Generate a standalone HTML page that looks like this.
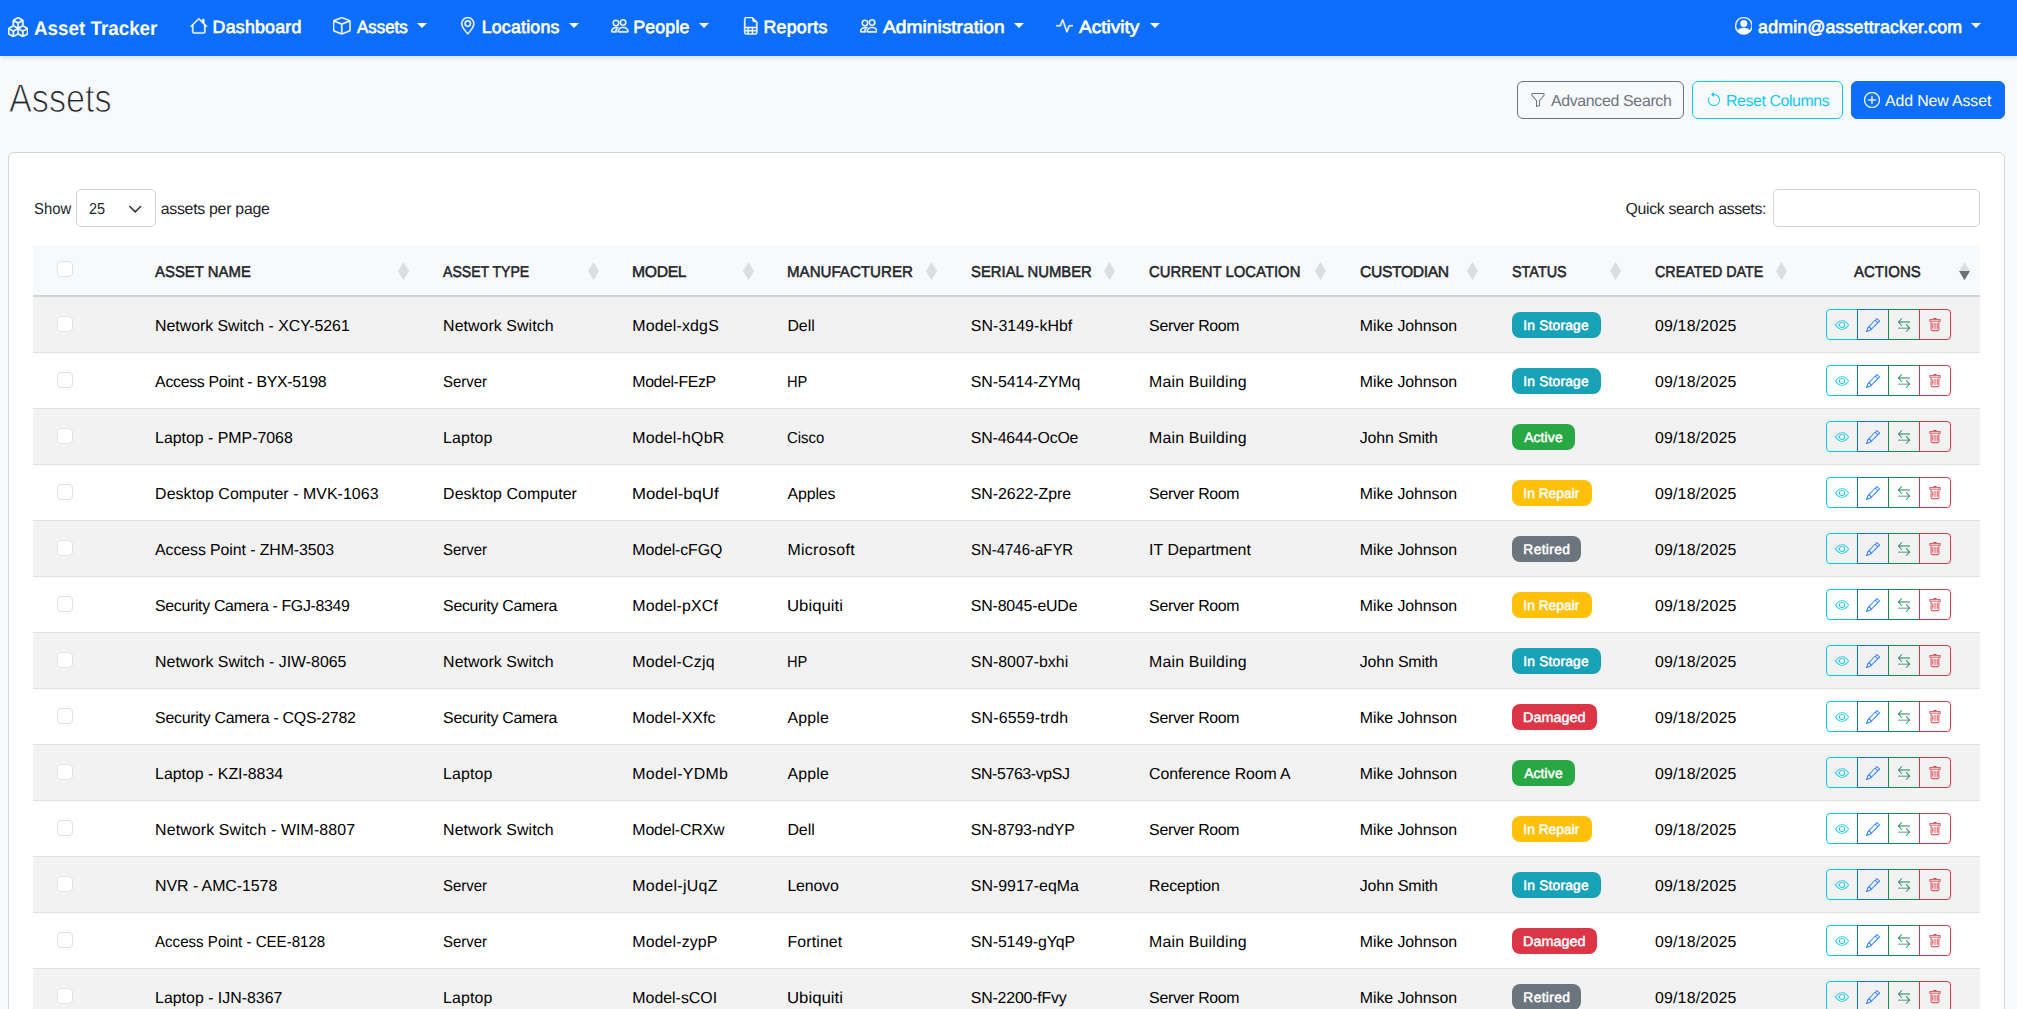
<!DOCTYPE html>
<html><head><meta charset="utf-8"><title>Assets - Asset Tracker</title>
<style>
html,body{margin:0;padding:0}
body{width:2017px;height:1009px;overflow:hidden;position:relative;background:#f8f9fa;font-family:"Liberation Sans",sans-serif;}
.t{position:absolute;white-space:pre;line-height:1;text-rendering:geometricPrecision}
.i{position:absolute;display:block}
.b{position:absolute;box-sizing:border-box}
.nav{left:0;top:0;width:2017px;height:56px;background:#0d6efd;box-shadow:0 2px 4px rgba(0,0,0,.1)}
.caret{position:absolute;width:0;height:0;border-top:5.3px solid #fff;border-left:5.3px solid transparent;border-right:5.3px solid transparent}
.card{left:8px;top:152px;width:1997px;height:900px;background:#fff;border:1px solid #d3d4d5;border-radius:6px}
.btn{height:38px;top:81px;border-radius:6px;border:1px solid}
.row{left:33px;width:1947px;height:56px;border-bottom:1px solid #dee2e6}
.odd{background:#f2f2f2}
.cb{width:16px;height:16px;left:57px;background:#fff;border:1px solid #dee2e6;border-radius:4px}
.bd{height:26px;border-radius:8px;left:1512px}
.ab{width:32px;height:31px;border:1px solid}
.ttl{-webkit-text-stroke:1.1px #f8f9fa}
.th{-webkit-text-stroke:.5px #212529}
.nv{-webkit-text-stroke:.65px #fff}
.bg{-webkit-text-stroke:.5px #fff}
</style></head><body>
<div class="b nav"></div>
<svg class="i" style="left:8px;top:17px;width:20.2px;height:20.2px" viewBox="0 0 16 16" fill="#fff" stroke="#fff" stroke-width="0.35" stroke-linejoin="round"><path d="M7.752.066a.5.5 0 0 1 .496 0l3.75 2.143a.5.5 0 0 1 .252.434v3.995l3.498 2A.5.5 0 0 1 16 9.07v4.286a.5.5 0 0 1-.252.434l-3.75 2.143a.5.5 0 0 1-.496 0l-3.502-2-3.502 2.001a.5.5 0 0 1-.496 0l-3.75-2.143A.5.5 0 0 1 0 13.357V9.071a.5.5 0 0 1 .252-.434L3.75 6.638V2.643a.5.5 0 0 1 .252-.434zM4.25 7.504 1.508 9.071l2.742 1.567 2.742-1.567zM7.5 9.933l-2.75 1.571v3.134l2.75-1.571zm1 3.134 2.75 1.571v-3.134L8.5 9.933zm.508-3.996 2.742 1.567 2.742-1.567-2.742-1.567zm2.242-2.433V3.504L8.5 5.076V8.21zM7.5 8.21V5.076L4.75 3.504v3.134zM5.258 2.643 8 4.21l2.742-1.567L8 1.076zM15 9.933l-2.75 1.571v3.134L15 13.067zM3.75 14.638v-3.134L1 9.933v3.134z"/></svg>
<svg class="i" style="left:190.1px;top:17.1px;width:17.6px;height:17.6px" viewBox="0 0 16 16" fill="#fff" stroke="#fff" stroke-width="0.4" stroke-linejoin="round"><path d="M8.707 1.5a1 1 0 0 0-1.414 0L.646 8.146a.5.5 0 0 0 .708.708L2 8.207V13.5A1.5 1.5 0 0 0 3.5 15h9a1.5 1.5 0 0 0 1.5-1.5V8.207l.646.647a.5.5 0 0 0 .708-.708L13 5.793V2.5a.5.5 0 0 0-.5-.5h-1a.5.5 0 0 0-.5.5v1.293zM13 7.207V13.5a.5.5 0 0 1-.5.5h-9a.5.5 0 0 1-.5-.5V7.207l5-5z"/></svg>
<svg class="i" style="left:333.3px;top:17.1px;width:17.6px;height:17.6px" viewBox="0 0 16 16" fill="#fff" stroke="#fff" stroke-width="0.4" stroke-linejoin="round"><path d="M8.186 1.113a.5.5 0 0 0-.372 0L1.846 3.5 8 5.961 14.154 3.5zM15 4.239l-6.5 2.6v7.922l6.5-2.6V4.24zM7.5 14.762V6.838L1 4.239v7.923zM7.443.184a1.5 1.5 0 0 1 1.114 0l7.129 2.852A.5.5 0 0 1 16 3.5v8.662a1 1 0 0 1-.629.928l-7.185 2.874a.5.5 0 0 1-.372 0L.63 13.09a1 1 0 0 1-.63-.928V3.5a.5.5 0 0 1 .314-.464z"/></svg>
<svg class="i" style="left:459.4px;top:17.1px;width:17.6px;height:17.6px" viewBox="0 0 16 16" fill="#fff" stroke="#fff" stroke-width="0.4" stroke-linejoin="round"><path d="M12.166 8.94c-.524 1.062-1.234 2.12-1.96 3.07A32 32 0 0 1 8 14.58a32 32 0 0 1-2.206-2.57c-.726-.95-1.436-2.008-1.96-3.07C3.304 7.867 3 6.862 3 6a5 5 0 0 1 10 0c0 .862-.305 1.867-.834 2.94M8 16s6-5.686 6-10A6 6 0 0 0 2 6c0 4.314 6 10 6 10"/><path d="M8 8a2 2 0 1 1 0-4 2 2 0 0 1 0 4m0 1a3 3 0 1 0 0-6 3 3 0 0 0 0 6"/></svg>
<svg class="i" style="left:611.4px;top:17.1px;width:17.6px;height:17.6px" viewBox="0 0 16 16" fill="#fff" stroke="#fff" stroke-width="0.4" stroke-linejoin="round"><path d="M15 14s1 0 1-1-1-4-5-4-5 3-5 4 1 1 1 1zm-7.978-1L7 12.996c.001-.264.167-1.03.76-1.72C8.312 10.629 9.282 10 11 10c1.717 0 2.687.63 3.24 1.276.593.69.758 1.457.76 1.72l-.008.002-.014.002zM11 7a2 2 0 1 0 0-4 2 2 0 0 0 0 4m3-2a3 3 0 1 1-6 0 3 3 0 0 1 6 0M6.936 9.28a6 6 0 0 0-1.23-.247A7 7 0 0 0 5 9c-4 0-5 3-5 4q0 1 1 1h4.216A2.24 2.24 0 0 1 5 13c0-1.01.377-2.042 1.09-2.904.243-.294.526-.569.846-.816M4.92 10A5.5 5.5 0 0 0 4 13H1c0-.26.164-1.03.76-1.724.545-.636 1.492-1.256 3.16-1.275ZM1.5 5.5a3 3 0 1 1 6 0 3 3 0 0 1-6 0m3-2a2 2 0 1 0 0 4 2 2 0 0 0 0-4"/></svg>
<svg class="i" style="left:741.6px;top:17.1px;width:17.6px;height:17.6px" viewBox="0 0 16 16" fill="#fff" stroke="#fff" stroke-width="0.4" stroke-linejoin="round"><path d="M14 14V4.5L9.5 0H4a2 2 0 0 0-2 2v12a2 2 0 0 0 2 2h8a2 2 0 0 0 2-2M9.5 3A1.5 1.5 0 0 0 11 4.5h2V9H3V2a1 1 0 0 1 1-1h5.5zM3 12v-2h2v2zm0 1h2v2H4a1 1 0 0 1-1-1zm3 2v-2h3v2zm4 0v-2h3v1a1 1 0 0 1-1 1zm3-3h-3v-2h3zm-7 0v-2h3v2z"/></svg>
<svg class="i" style="left:859.7px;top:17.1px;width:17.6px;height:17.6px" viewBox="0 0 16 16" fill="#fff" stroke="#fff" stroke-width="0.4" stroke-linejoin="round"><path d="M15 14s1 0 1-1-1-4-5-4-5 3-5 4 1 1 1 1zm-7.978-1L7 12.996c.001-.264.167-1.03.76-1.72C8.312 10.629 9.282 10 11 10c1.717 0 2.687.63 3.24 1.276.593.69.758 1.457.76 1.72l-.008.002-.014.002zM11 7a2 2 0 1 0 0-4 2 2 0 0 0 0 4m3-2a3 3 0 1 1-6 0 3 3 0 0 1 6 0M6.936 9.28a6 6 0 0 0-1.23-.247A7 7 0 0 0 5 9c-4 0-5 3-5 4q0 1 1 1h4.216A2.24 2.24 0 0 1 5 13c0-1.01.377-2.042 1.09-2.904.243-.294.526-.569.846-.816M4.92 10A5.5 5.5 0 0 0 4 13H1c0-.26.164-1.03.76-1.724.545-.636 1.492-1.256 3.16-1.275ZM1.5 5.5a3 3 0 1 1 6 0 3 3 0 0 1-6 0m3-2a2 2 0 1 0 0 4 2 2 0 0 0 0-4"/></svg>
<svg class="i" style="left:1055.8px;top:17.1px;width:17.6px;height:17.6px" viewBox="0 0 16 16" fill="#fff" stroke="#fff" stroke-width="0.4" stroke-linejoin="round"><path fill-rule="evenodd" d="M6 2a.5.5 0 0 1 .47.33L10 12.036l1.53-4.208A.5.5 0 0 1 12 7.5h3.5a.5.5 0 0 1 0 1h-3.15l-1.88 5.17a.5.5 0 0 1-.94 0L6 3.964 4.47 8.171A.5.5 0 0 1 4 8.5H.5a.5.5 0 0 1 0-1h3.15l1.88-5.17A.5.5 0 0 1 6 2"/></svg>
<svg class="i" style="left:1734.6px;top:17.1px;width:17.6px;height:17.6px" viewBox="0 0 16 16" fill="#fff" stroke="#fff" stroke-width="0.4" stroke-linejoin="round"><path d="M11 6a3 3 0 1 1-6 0 3 3 0 0 1 6 0"/><path fill-rule="evenodd" d="M0 8a8 8 0 1 1 16 0A8 8 0 0 1 0 8m8-7a7 7 0 0 0-5.468 11.37C3.242 11.226 4.805 10 8 10s4.757 1.225 5.468 2.37A7 7 0 0 0 8 1"/></svg>
<div class="caret" style="left:417.1px;top:23.2px"></div>
<div class="caret" style="left:569.1px;top:23.2px"></div>
<div class="caret" style="left:699.4px;top:23.2px"></div>
<div class="caret" style="left:1013.6px;top:23.2px"></div>
<div class="caret" style="left:1149.5px;top:23.2px"></div>
<div class="caret" style="left:1971px;top:23.2px"></div>
<div class="b btn" style="left:1517px;width:167px;border-color:#6c757d"></div>
<div class="b btn" style="left:1692px;width:151px;border-color:#0dcaf0"></div>
<div class="b btn" style="left:1851px;width:154px;border-color:#0d6efd;background:#0d6efd"></div>
<svg class="i" style="left:1530px;top:92px;width:16px;height:16px" viewBox="0 0 16 16" fill="#6c757d"><path d="M1.5 1.5A.5.5 0 0 1 2 1h12a.5.5 0 0 1 .5.5v2a.5.5 0 0 1-.128.334L10 8.692V13.5a.5.5 0 0 1-.342.474l-3 1A.5.5 0 0 1 6 14.5V8.692L1.628 3.834A.5.5 0 0 1 1.5 3.5zm1 .5v1.308l4.372 4.858A.5.5 0 0 1 7 8.5v5.306l2-.666V8.5a.5.5 0 0 1 .128-.334L13.5 3.308V2z"/></svg>
<svg class="i" style="left:1705.5px;top:92px;width:16px;height:16px" viewBox="0 0 16 16" fill="#0dcaf0"><path fill-rule="evenodd" d="M8 3a5 5 0 1 1-4.546 2.914.5.5 0 0 0-.908-.417A6 6 0 1 0 8 2z"/><path d="M8 4.466V.534a.25.25 0 0 0-.41-.192L5.23 2.308a.25.25 0 0 0 0 .384l2.36 1.966A.25.25 0 0 0 8 4.466"/></svg>
<svg class="i" style="left:1864px;top:92px;width:16px;height:16px" viewBox="0 0 16 16" fill="#fff" stroke="#fff" stroke-width="0.3" stroke-linejoin="round"><path d="M8 15A7 7 0 1 1 8 1a7 7 0 0 1 0 14m0 1A8 8 0 1 0 8 0a8 8 0 0 0 0 16"/><path d="M8 4a.5.5 0 0 1 .5.5v3h3a.5.5 0 0 1 0 1h-3v3a.5.5 0 0 1-1 0v-3h-3a.5.5 0 0 1 0-1h3v-3A.5.5 0 0 1 8 4"/></svg>
<div class="b card"></div>
<div class="b" style="left:76px;top:189px;width:80px;height:38px;border:1px solid #ced4da;border-radius:5px;background:#fff"></div>
<svg class="i" style="left:127.75px;top:201.75px;width:14.4px;height:14.4px" viewBox="0 0 16 16"><path fill="none" stroke="#343a40" stroke-linecap="round" stroke-linejoin="round" stroke-width="1.8" d="m2 5 6 6 6-6"/></svg>
<div class="b" style="left:1773px;top:189px;width:207px;height:38px;border:1px solid #ced4da;border-radius:5px;background:#fff"></div>
<div class="b" style="left:33px;top:245px;width:1947px;height:52px;background:#f8f9fa;border-bottom:2px solid #ced4da"></div>
<div class="b cb" style="top:261px"></div>
<svg class="i" style="left:398.0px;top:261.9px;width:11px;height:18.2px" viewBox="0 0 10.4 17.3" preserveAspectRatio="none"><path d="M5.2 0 10.4 8.65 5.2 17.3 0 8.65z" fill="#dcddde"/></svg>
<svg class="i" style="left:587.9px;top:261.9px;width:11px;height:18.2px" viewBox="0 0 10.4 17.3" preserveAspectRatio="none"><path d="M5.2 0 10.4 8.65 5.2 17.3 0 8.65z" fill="#dcddde"/></svg>
<svg class="i" style="left:743.0px;top:261.9px;width:11px;height:18.2px" viewBox="0 0 10.4 17.3" preserveAspectRatio="none"><path d="M5.2 0 10.4 8.65 5.2 17.3 0 8.65z" fill="#dcddde"/></svg>
<svg class="i" style="left:925.7px;top:261.9px;width:11px;height:18.2px" viewBox="0 0 10.4 17.3" preserveAspectRatio="none"><path d="M5.2 0 10.4 8.65 5.2 17.3 0 8.65z" fill="#dcddde"/></svg>
<svg class="i" style="left:1104.1px;top:261.9px;width:11px;height:18.2px" viewBox="0 0 10.4 17.3" preserveAspectRatio="none"><path d="M5.2 0 10.4 8.65 5.2 17.3 0 8.65z" fill="#dcddde"/></svg>
<svg class="i" style="left:1314.8px;top:261.9px;width:11px;height:18.2px" viewBox="0 0 10.4 17.3" preserveAspectRatio="none"><path d="M5.2 0 10.4 8.65 5.2 17.3 0 8.65z" fill="#dcddde"/></svg>
<svg class="i" style="left:1466.8px;top:261.9px;width:11px;height:18.2px" viewBox="0 0 10.4 17.3" preserveAspectRatio="none"><path d="M5.2 0 10.4 8.65 5.2 17.3 0 8.65z" fill="#dcddde"/></svg>
<svg class="i" style="left:1610.2px;top:261.9px;width:11px;height:18.2px" viewBox="0 0 10.4 17.3" preserveAspectRatio="none"><path d="M5.2 0 10.4 8.65 5.2 17.3 0 8.65z" fill="#dcddde"/></svg>
<svg class="i" style="left:1776.1px;top:261.9px;width:11px;height:18.2px" viewBox="0 0 10.4 17.3" preserveAspectRatio="none"><path d="M5.2 0 10.4 8.65 5.2 17.3 0 8.65z" fill="#dcddde"/></svg>
<svg class="i" style="left:1959.0px;top:261.9px;width:11px;height:18.2px" viewBox="0 0 10.4 17.3" preserveAspectRatio="none"><path d="M5.2 0 10.4 8.65H0z" fill="#dcddde"/><path d="M0 8.65h10.4L5.2 17.3z" fill="#6e7174"/></svg>
<div class="b row odd" style="top:297px"></div>
<div class="b cb" style="top:316px"></div>
<div class="b bd" style="top:312px;width:89.3px;background:#17a2b8"></div>
<div class="b ab" style="left:1826px;top:309px;border-color:#0dcaf0;border-radius:4px 0 0 4px;"></div>
<svg class="i" style="left:1835px;top:317.5px;width:14px;height:14px" viewBox="0 0 16 16" fill="#0dcaf0"><path d="M16 8s-3-5.5-8-5.5S0 8 0 8s3 5.5 8 5.5S16 8 16 8M1.173 8a13 13 0 0 1 1.66-2.043C4.12 4.668 5.88 3.5 8 3.5s3.879 1.168 5.168 2.457A13 13 0 0 1 14.828 8q-.086.13-.195.288c-.335.48-.83 1.12-1.465 1.755C11.879 11.332 10.119 12.5 8 12.5s-3.879-1.168-5.168-2.457A13 13 0 0 1 1.172 8z"/><path d="M8 5.5a2.5 2.5 0 1 0 0 5 2.5 2.5 0 0 0 0-5M4.5 8a3.5 3.5 0 1 1 7 0 3.5 3.5 0 0 1-7 0"/></svg>
<div class="b ab" style="left:1857px;top:309px;border-color:#0d6efd;"></div>
<svg class="i" style="left:1866px;top:317.5px;width:14px;height:14px" viewBox="0 0 16 16" fill="#0d6efd"><path d="M12.146.146a.5.5 0 0 1 .708 0l3 3a.5.5 0 0 1 0 .708l-10 10a.5.5 0 0 1-.168.11l-5 2a.5.5 0 0 1-.65-.65l2-5a.5.5 0 0 1 .11-.168zM11.207 2.5 13.5 4.793 14.793 3.5 12.5 1.207zm1.586 3L10.5 3.207 4 9.707V10h.5a.5.5 0 0 1 .5.5v.5h.5a.5.5 0 0 1 .5.5v.5h.293zm-9.761 5.175-.106.106-1.528 3.821 3.821-1.528.106-.106A.5.5 0 0 1 5 12.5V12h-.5a.5.5 0 0 1-.5-.5V11h-.5a.5.5 0 0 1-.468-.325"/></svg>
<div class="b ab" style="left:1888px;top:309px;border-color:#198754;"></div>
<svg class="i" style="left:1897px;top:317.5px;width:14px;height:14px" viewBox="0 0 16 16" fill="#198754"><path fill-rule="evenodd" d="M1 11.5a.5.5 0 0 0 .5.5h11.793l-3.147 3.146a.5.5 0 0 0 .708.708l4-4a.5.5 0 0 0 0-.708l-4-4a.5.5 0 0 0-.708.708L13.293 11H1.5a.5.5 0 0 0-.5.5m14-7a.5.5 0 0 1-.5.5H2.707l3.147 3.146a.5.5 0 1 1-.708.708l-4-4a.5.5 0 0 1 0-.708l4-4a.5.5 0 1 1 .708.708L2.707 4H14.5a.5.5 0 0 1 .5.5"/></svg>
<div class="b ab" style="left:1919px;top:309px;border-color:#dc3545;border-radius:0 4px 4px 0;"></div>
<svg class="i" style="left:1928px;top:317.5px;width:14px;height:14px" viewBox="0 0 16 16" fill="#dc3545"><path d="M5.5 5.5A.5.5 0 0 1 6 6v6a.5.5 0 0 1-1 0V6a.5.5 0 0 1 .5-.5m2.500 0a.5.5 0 0 1 .5.5v6a.5.5 0 0 1-1 0V6a.5.5 0 0 1 .5-.5m3 .5a.5.5 0 0 0-1 0v6a.5.5 0 0 0 1 0z"/><path d="M14.5 3a1 1 0 0 1-1 1H13v9a2 2 0 0 1-2 2H5a2 2 0 0 1-2-2V4h-.5a1 1 0 0 1-1-1V2a1 1 0 0 1 1-1H6a1 1 0 0 1 1-1h2a1 1 0 0 1 1 1h3.500a1 1 0 0 1 1 1zM4.118 4 4 4.059V13a1 1 0 0 0 1 1h6a1 1 0 0 0 1-1V4.059L11.882 4zM2.500 3h11V2h-11z"/></svg>
<div class="b row" style="top:353px"></div>
<div class="b cb" style="top:372px"></div>
<div class="b bd" style="top:368px;width:89.3px;background:#17a2b8"></div>
<div class="b ab" style="left:1826px;top:365px;border-color:#0dcaf0;border-radius:4px 0 0 4px;"></div>
<svg class="i" style="left:1835px;top:373.5px;width:14px;height:14px" viewBox="0 0 16 16" fill="#0dcaf0"><path d="M16 8s-3-5.5-8-5.5S0 8 0 8s3 5.5 8 5.5S16 8 16 8M1.173 8a13 13 0 0 1 1.66-2.043C4.12 4.668 5.88 3.5 8 3.5s3.879 1.168 5.168 2.457A13 13 0 0 1 14.828 8q-.086.13-.195.288c-.335.48-.83 1.12-1.465 1.755C11.879 11.332 10.119 12.5 8 12.5s-3.879-1.168-5.168-2.457A13 13 0 0 1 1.172 8z"/><path d="M8 5.5a2.5 2.5 0 1 0 0 5 2.5 2.5 0 0 0 0-5M4.5 8a3.5 3.5 0 1 1 7 0 3.5 3.5 0 0 1-7 0"/></svg>
<div class="b ab" style="left:1857px;top:365px;border-color:#0d6efd;"></div>
<svg class="i" style="left:1866px;top:373.5px;width:14px;height:14px" viewBox="0 0 16 16" fill="#0d6efd"><path d="M12.146.146a.5.5 0 0 1 .708 0l3 3a.5.5 0 0 1 0 .708l-10 10a.5.5 0 0 1-.168.11l-5 2a.5.5 0 0 1-.65-.65l2-5a.5.5 0 0 1 .11-.168zM11.207 2.5 13.5 4.793 14.793 3.5 12.5 1.207zm1.586 3L10.5 3.207 4 9.707V10h.5a.5.5 0 0 1 .5.5v.5h.5a.5.5 0 0 1 .5.5v.5h.293zm-9.761 5.175-.106.106-1.528 3.821 3.821-1.528.106-.106A.5.5 0 0 1 5 12.5V12h-.5a.5.5 0 0 1-.5-.5V11h-.5a.5.5 0 0 1-.468-.325"/></svg>
<div class="b ab" style="left:1888px;top:365px;border-color:#198754;"></div>
<svg class="i" style="left:1897px;top:373.5px;width:14px;height:14px" viewBox="0 0 16 16" fill="#198754"><path fill-rule="evenodd" d="M1 11.5a.5.5 0 0 0 .5.5h11.793l-3.147 3.146a.5.5 0 0 0 .708.708l4-4a.5.5 0 0 0 0-.708l-4-4a.5.5 0 0 0-.708.708L13.293 11H1.5a.5.5 0 0 0-.5.5m14-7a.5.5 0 0 1-.5.5H2.707l3.147 3.146a.5.5 0 1 1-.708.708l-4-4a.5.5 0 0 1 0-.708l4-4a.5.5 0 1 1 .708.708L2.707 4H14.5a.5.5 0 0 1 .5.5"/></svg>
<div class="b ab" style="left:1919px;top:365px;border-color:#dc3545;border-radius:0 4px 4px 0;"></div>
<svg class="i" style="left:1928px;top:373.5px;width:14px;height:14px" viewBox="0 0 16 16" fill="#dc3545"><path d="M5.5 5.5A.5.5 0 0 1 6 6v6a.5.5 0 0 1-1 0V6a.5.5 0 0 1 .5-.5m2.500 0a.5.5 0 0 1 .5.5v6a.5.5 0 0 1-1 0V6a.5.5 0 0 1 .5-.5m3 .5a.5.5 0 0 0-1 0v6a.5.5 0 0 0 1 0z"/><path d="M14.5 3a1 1 0 0 1-1 1H13v9a2 2 0 0 1-2 2H5a2 2 0 0 1-2-2V4h-.5a1 1 0 0 1-1-1V2a1 1 0 0 1 1-1H6a1 1 0 0 1 1-1h2a1 1 0 0 1 1 1h3.500a1 1 0 0 1 1 1zM4.118 4 4 4.059V13a1 1 0 0 0 1 1h6a1 1 0 0 0 1-1V4.059L11.882 4zM2.500 3h11V2h-11z"/></svg>
<div class="b row odd" style="top:409px"></div>
<div class="b cb" style="top:428px"></div>
<div class="b bd" style="top:424px;width:62.8px;background:#28a745"></div>
<div class="b ab" style="left:1826px;top:421px;border-color:#0dcaf0;border-radius:4px 0 0 4px;"></div>
<svg class="i" style="left:1835px;top:429.5px;width:14px;height:14px" viewBox="0 0 16 16" fill="#0dcaf0"><path d="M16 8s-3-5.5-8-5.5S0 8 0 8s3 5.5 8 5.5S16 8 16 8M1.173 8a13 13 0 0 1 1.66-2.043C4.12 4.668 5.88 3.5 8 3.5s3.879 1.168 5.168 2.457A13 13 0 0 1 14.828 8q-.086.13-.195.288c-.335.48-.83 1.12-1.465 1.755C11.879 11.332 10.119 12.5 8 12.5s-3.879-1.168-5.168-2.457A13 13 0 0 1 1.172 8z"/><path d="M8 5.5a2.5 2.5 0 1 0 0 5 2.5 2.5 0 0 0 0-5M4.5 8a3.5 3.5 0 1 1 7 0 3.5 3.5 0 0 1-7 0"/></svg>
<div class="b ab" style="left:1857px;top:421px;border-color:#0d6efd;"></div>
<svg class="i" style="left:1866px;top:429.5px;width:14px;height:14px" viewBox="0 0 16 16" fill="#0d6efd"><path d="M12.146.146a.5.5 0 0 1 .708 0l3 3a.5.5 0 0 1 0 .708l-10 10a.5.5 0 0 1-.168.11l-5 2a.5.5 0 0 1-.65-.65l2-5a.5.5 0 0 1 .11-.168zM11.207 2.5 13.5 4.793 14.793 3.5 12.5 1.207zm1.586 3L10.5 3.207 4 9.707V10h.5a.5.5 0 0 1 .5.5v.5h.5a.5.5 0 0 1 .5.5v.5h.293zm-9.761 5.175-.106.106-1.528 3.821 3.821-1.528.106-.106A.5.5 0 0 1 5 12.5V12h-.5a.5.5 0 0 1-.5-.5V11h-.5a.5.5 0 0 1-.468-.325"/></svg>
<div class="b ab" style="left:1888px;top:421px;border-color:#198754;"></div>
<svg class="i" style="left:1897px;top:429.5px;width:14px;height:14px" viewBox="0 0 16 16" fill="#198754"><path fill-rule="evenodd" d="M1 11.5a.5.5 0 0 0 .5.5h11.793l-3.147 3.146a.5.5 0 0 0 .708.708l4-4a.5.5 0 0 0 0-.708l-4-4a.5.5 0 0 0-.708.708L13.293 11H1.5a.5.5 0 0 0-.5.5m14-7a.5.5 0 0 1-.5.5H2.707l3.147 3.146a.5.5 0 1 1-.708.708l-4-4a.5.5 0 0 1 0-.708l4-4a.5.5 0 1 1 .708.708L2.707 4H14.5a.5.5 0 0 1 .5.5"/></svg>
<div class="b ab" style="left:1919px;top:421px;border-color:#dc3545;border-radius:0 4px 4px 0;"></div>
<svg class="i" style="left:1928px;top:429.5px;width:14px;height:14px" viewBox="0 0 16 16" fill="#dc3545"><path d="M5.5 5.5A.5.5 0 0 1 6 6v6a.5.5 0 0 1-1 0V6a.5.5 0 0 1 .5-.5m2.500 0a.5.5 0 0 1 .5.5v6a.5.5 0 0 1-1 0V6a.5.5 0 0 1 .5-.5m3 .5a.5.5 0 0 0-1 0v6a.5.5 0 0 0 1 0z"/><path d="M14.5 3a1 1 0 0 1-1 1H13v9a2 2 0 0 1-2 2H5a2 2 0 0 1-2-2V4h-.5a1 1 0 0 1-1-1V2a1 1 0 0 1 1-1H6a1 1 0 0 1 1-1h2a1 1 0 0 1 1 1h3.500a1 1 0 0 1 1 1zM4.118 4 4 4.059V13a1 1 0 0 0 1 1h6a1 1 0 0 0 1-1V4.059L11.882 4zM2.500 3h11V2h-11z"/></svg>
<div class="b row" style="top:465px"></div>
<div class="b cb" style="top:484px"></div>
<div class="b bd" style="top:480px;width:79.9px;background:#ffc107"></div>
<div class="b ab" style="left:1826px;top:477px;border-color:#0dcaf0;border-radius:4px 0 0 4px;"></div>
<svg class="i" style="left:1835px;top:485.5px;width:14px;height:14px" viewBox="0 0 16 16" fill="#0dcaf0"><path d="M16 8s-3-5.5-8-5.5S0 8 0 8s3 5.5 8 5.5S16 8 16 8M1.173 8a13 13 0 0 1 1.66-2.043C4.12 4.668 5.88 3.5 8 3.5s3.879 1.168 5.168 2.457A13 13 0 0 1 14.828 8q-.086.13-.195.288c-.335.48-.83 1.12-1.465 1.755C11.879 11.332 10.119 12.5 8 12.5s-3.879-1.168-5.168-2.457A13 13 0 0 1 1.172 8z"/><path d="M8 5.5a2.5 2.5 0 1 0 0 5 2.5 2.5 0 0 0 0-5M4.5 8a3.5 3.5 0 1 1 7 0 3.5 3.5 0 0 1-7 0"/></svg>
<div class="b ab" style="left:1857px;top:477px;border-color:#0d6efd;"></div>
<svg class="i" style="left:1866px;top:485.5px;width:14px;height:14px" viewBox="0 0 16 16" fill="#0d6efd"><path d="M12.146.146a.5.5 0 0 1 .708 0l3 3a.5.5 0 0 1 0 .708l-10 10a.5.5 0 0 1-.168.11l-5 2a.5.5 0 0 1-.65-.65l2-5a.5.5 0 0 1 .11-.168zM11.207 2.5 13.5 4.793 14.793 3.5 12.5 1.207zm1.586 3L10.5 3.207 4 9.707V10h.5a.5.5 0 0 1 .5.5v.5h.5a.5.5 0 0 1 .5.5v.5h.293zm-9.761 5.175-.106.106-1.528 3.821 3.821-1.528.106-.106A.5.5 0 0 1 5 12.5V12h-.5a.5.5 0 0 1-.5-.5V11h-.5a.5.5 0 0 1-.468-.325"/></svg>
<div class="b ab" style="left:1888px;top:477px;border-color:#198754;"></div>
<svg class="i" style="left:1897px;top:485.5px;width:14px;height:14px" viewBox="0 0 16 16" fill="#198754"><path fill-rule="evenodd" d="M1 11.5a.5.5 0 0 0 .5.5h11.793l-3.147 3.146a.5.5 0 0 0 .708.708l4-4a.5.5 0 0 0 0-.708l-4-4a.5.5 0 0 0-.708.708L13.293 11H1.5a.5.5 0 0 0-.5.5m14-7a.5.5 0 0 1-.5.5H2.707l3.147 3.146a.5.5 0 1 1-.708.708l-4-4a.5.5 0 0 1 0-.708l4-4a.5.5 0 1 1 .708.708L2.707 4H14.5a.5.5 0 0 1 .5.5"/></svg>
<div class="b ab" style="left:1919px;top:477px;border-color:#dc3545;border-radius:0 4px 4px 0;"></div>
<svg class="i" style="left:1928px;top:485.5px;width:14px;height:14px" viewBox="0 0 16 16" fill="#dc3545"><path d="M5.5 5.5A.5.5 0 0 1 6 6v6a.5.5 0 0 1-1 0V6a.5.5 0 0 1 .5-.5m2.500 0a.5.5 0 0 1 .5.5v6a.5.5 0 0 1-1 0V6a.5.5 0 0 1 .5-.5m3 .5a.5.5 0 0 0-1 0v6a.5.5 0 0 0 1 0z"/><path d="M14.5 3a1 1 0 0 1-1 1H13v9a2 2 0 0 1-2 2H5a2 2 0 0 1-2-2V4h-.5a1 1 0 0 1-1-1V2a1 1 0 0 1 1-1H6a1 1 0 0 1 1-1h2a1 1 0 0 1 1 1h3.500a1 1 0 0 1 1 1zM4.118 4 4 4.059V13a1 1 0 0 0 1 1h6a1 1 0 0 0 1-1V4.059L11.882 4zM2.500 3h11V2h-11z"/></svg>
<div class="b row odd" style="top:521px"></div>
<div class="b cb" style="top:540px"></div>
<div class="b bd" style="top:536px;width:69px;background:#6c757d"></div>
<div class="b ab" style="left:1826px;top:533px;border-color:#0dcaf0;border-radius:4px 0 0 4px;"></div>
<svg class="i" style="left:1835px;top:541.5px;width:14px;height:14px" viewBox="0 0 16 16" fill="#0dcaf0"><path d="M16 8s-3-5.5-8-5.5S0 8 0 8s3 5.5 8 5.5S16 8 16 8M1.173 8a13 13 0 0 1 1.66-2.043C4.12 4.668 5.88 3.5 8 3.5s3.879 1.168 5.168 2.457A13 13 0 0 1 14.828 8q-.086.13-.195.288c-.335.48-.83 1.12-1.465 1.755C11.879 11.332 10.119 12.5 8 12.5s-3.879-1.168-5.168-2.457A13 13 0 0 1 1.172 8z"/><path d="M8 5.5a2.5 2.5 0 1 0 0 5 2.5 2.5 0 0 0 0-5M4.5 8a3.5 3.5 0 1 1 7 0 3.5 3.5 0 0 1-7 0"/></svg>
<div class="b ab" style="left:1857px;top:533px;border-color:#0d6efd;"></div>
<svg class="i" style="left:1866px;top:541.5px;width:14px;height:14px" viewBox="0 0 16 16" fill="#0d6efd"><path d="M12.146.146a.5.5 0 0 1 .708 0l3 3a.5.5 0 0 1 0 .708l-10 10a.5.5 0 0 1-.168.11l-5 2a.5.5 0 0 1-.65-.65l2-5a.5.5 0 0 1 .11-.168zM11.207 2.5 13.5 4.793 14.793 3.5 12.5 1.207zm1.586 3L10.5 3.207 4 9.707V10h.5a.5.5 0 0 1 .5.5v.5h.5a.5.5 0 0 1 .5.5v.5h.293zm-9.761 5.175-.106.106-1.528 3.821 3.821-1.528.106-.106A.5.5 0 0 1 5 12.5V12h-.5a.5.5 0 0 1-.5-.5V11h-.5a.5.5 0 0 1-.468-.325"/></svg>
<div class="b ab" style="left:1888px;top:533px;border-color:#198754;"></div>
<svg class="i" style="left:1897px;top:541.5px;width:14px;height:14px" viewBox="0 0 16 16" fill="#198754"><path fill-rule="evenodd" d="M1 11.5a.5.5 0 0 0 .5.5h11.793l-3.147 3.146a.5.5 0 0 0 .708.708l4-4a.5.5 0 0 0 0-.708l-4-4a.5.5 0 0 0-.708.708L13.293 11H1.5a.5.5 0 0 0-.5.5m14-7a.5.5 0 0 1-.5.5H2.707l3.147 3.146a.5.5 0 1 1-.708.708l-4-4a.5.5 0 0 1 0-.708l4-4a.5.5 0 1 1 .708.708L2.707 4H14.5a.5.5 0 0 1 .5.5"/></svg>
<div class="b ab" style="left:1919px;top:533px;border-color:#dc3545;border-radius:0 4px 4px 0;"></div>
<svg class="i" style="left:1928px;top:541.5px;width:14px;height:14px" viewBox="0 0 16 16" fill="#dc3545"><path d="M5.5 5.5A.5.5 0 0 1 6 6v6a.5.5 0 0 1-1 0V6a.5.5 0 0 1 .5-.5m2.500 0a.5.5 0 0 1 .5.5v6a.5.5 0 0 1-1 0V6a.5.5 0 0 1 .5-.5m3 .5a.5.5 0 0 0-1 0v6a.5.5 0 0 0 1 0z"/><path d="M14.5 3a1 1 0 0 1-1 1H13v9a2 2 0 0 1-2 2H5a2 2 0 0 1-2-2V4h-.5a1 1 0 0 1-1-1V2a1 1 0 0 1 1-1H6a1 1 0 0 1 1-1h2a1 1 0 0 1 1 1h3.500a1 1 0 0 1 1 1zM4.118 4 4 4.059V13a1 1 0 0 0 1 1h6a1 1 0 0 0 1-1V4.059L11.882 4zM2.500 3h11V2h-11z"/></svg>
<div class="b row" style="top:577px"></div>
<div class="b cb" style="top:596px"></div>
<div class="b bd" style="top:592px;width:79.9px;background:#ffc107"></div>
<div class="b ab" style="left:1826px;top:589px;border-color:#0dcaf0;border-radius:4px 0 0 4px;"></div>
<svg class="i" style="left:1835px;top:597.5px;width:14px;height:14px" viewBox="0 0 16 16" fill="#0dcaf0"><path d="M16 8s-3-5.5-8-5.5S0 8 0 8s3 5.5 8 5.5S16 8 16 8M1.173 8a13 13 0 0 1 1.66-2.043C4.12 4.668 5.88 3.5 8 3.5s3.879 1.168 5.168 2.457A13 13 0 0 1 14.828 8q-.086.13-.195.288c-.335.48-.83 1.12-1.465 1.755C11.879 11.332 10.119 12.5 8 12.5s-3.879-1.168-5.168-2.457A13 13 0 0 1 1.172 8z"/><path d="M8 5.5a2.5 2.5 0 1 0 0 5 2.5 2.5 0 0 0 0-5M4.5 8a3.5 3.5 0 1 1 7 0 3.5 3.5 0 0 1-7 0"/></svg>
<div class="b ab" style="left:1857px;top:589px;border-color:#0d6efd;"></div>
<svg class="i" style="left:1866px;top:597.5px;width:14px;height:14px" viewBox="0 0 16 16" fill="#0d6efd"><path d="M12.146.146a.5.5 0 0 1 .708 0l3 3a.5.5 0 0 1 0 .708l-10 10a.5.5 0 0 1-.168.11l-5 2a.5.5 0 0 1-.65-.65l2-5a.5.5 0 0 1 .11-.168zM11.207 2.5 13.5 4.793 14.793 3.5 12.5 1.207zm1.586 3L10.5 3.207 4 9.707V10h.5a.5.5 0 0 1 .5.5v.5h.5a.5.5 0 0 1 .5.5v.5h.293zm-9.761 5.175-.106.106-1.528 3.821 3.821-1.528.106-.106A.5.5 0 0 1 5 12.5V12h-.5a.5.5 0 0 1-.5-.5V11h-.5a.5.5 0 0 1-.468-.325"/></svg>
<div class="b ab" style="left:1888px;top:589px;border-color:#198754;"></div>
<svg class="i" style="left:1897px;top:597.5px;width:14px;height:14px" viewBox="0 0 16 16" fill="#198754"><path fill-rule="evenodd" d="M1 11.5a.5.5 0 0 0 .5.5h11.793l-3.147 3.146a.5.5 0 0 0 .708.708l4-4a.5.5 0 0 0 0-.708l-4-4a.5.5 0 0 0-.708.708L13.293 11H1.5a.5.5 0 0 0-.5.5m14-7a.5.5 0 0 1-.5.5H2.707l3.147 3.146a.5.5 0 1 1-.708.708l-4-4a.5.5 0 0 1 0-.708l4-4a.5.5 0 1 1 .708.708L2.707 4H14.5a.5.5 0 0 1 .5.5"/></svg>
<div class="b ab" style="left:1919px;top:589px;border-color:#dc3545;border-radius:0 4px 4px 0;"></div>
<svg class="i" style="left:1928px;top:597.5px;width:14px;height:14px" viewBox="0 0 16 16" fill="#dc3545"><path d="M5.5 5.5A.5.5 0 0 1 6 6v6a.5.5 0 0 1-1 0V6a.5.5 0 0 1 .5-.5m2.500 0a.5.5 0 0 1 .5.5v6a.5.5 0 0 1-1 0V6a.5.5 0 0 1 .5-.5m3 .5a.5.5 0 0 0-1 0v6a.5.5 0 0 0 1 0z"/><path d="M14.5 3a1 1 0 0 1-1 1H13v9a2 2 0 0 1-2 2H5a2 2 0 0 1-2-2V4h-.5a1 1 0 0 1-1-1V2a1 1 0 0 1 1-1H6a1 1 0 0 1 1-1h2a1 1 0 0 1 1 1h3.500a1 1 0 0 1 1 1zM4.118 4 4 4.059V13a1 1 0 0 0 1 1h6a1 1 0 0 0 1-1V4.059L11.882 4zM2.500 3h11V2h-11z"/></svg>
<div class="b row odd" style="top:633px"></div>
<div class="b cb" style="top:652px"></div>
<div class="b bd" style="top:648px;width:89.3px;background:#17a2b8"></div>
<div class="b ab" style="left:1826px;top:645px;border-color:#0dcaf0;border-radius:4px 0 0 4px;"></div>
<svg class="i" style="left:1835px;top:653.5px;width:14px;height:14px" viewBox="0 0 16 16" fill="#0dcaf0"><path d="M16 8s-3-5.5-8-5.5S0 8 0 8s3 5.5 8 5.5S16 8 16 8M1.173 8a13 13 0 0 1 1.66-2.043C4.12 4.668 5.88 3.5 8 3.5s3.879 1.168 5.168 2.457A13 13 0 0 1 14.828 8q-.086.13-.195.288c-.335.48-.83 1.12-1.465 1.755C11.879 11.332 10.119 12.5 8 12.5s-3.879-1.168-5.168-2.457A13 13 0 0 1 1.172 8z"/><path d="M8 5.5a2.5 2.5 0 1 0 0 5 2.5 2.5 0 0 0 0-5M4.5 8a3.5 3.5 0 1 1 7 0 3.5 3.5 0 0 1-7 0"/></svg>
<div class="b ab" style="left:1857px;top:645px;border-color:#0d6efd;"></div>
<svg class="i" style="left:1866px;top:653.5px;width:14px;height:14px" viewBox="0 0 16 16" fill="#0d6efd"><path d="M12.146.146a.5.5 0 0 1 .708 0l3 3a.5.5 0 0 1 0 .708l-10 10a.5.5 0 0 1-.168.11l-5 2a.5.5 0 0 1-.65-.65l2-5a.5.5 0 0 1 .11-.168zM11.207 2.5 13.5 4.793 14.793 3.5 12.5 1.207zm1.586 3L10.5 3.207 4 9.707V10h.5a.5.5 0 0 1 .5.5v.5h.5a.5.5 0 0 1 .5.5v.5h.293zm-9.761 5.175-.106.106-1.528 3.821 3.821-1.528.106-.106A.5.5 0 0 1 5 12.5V12h-.5a.5.5 0 0 1-.5-.5V11h-.5a.5.5 0 0 1-.468-.325"/></svg>
<div class="b ab" style="left:1888px;top:645px;border-color:#198754;"></div>
<svg class="i" style="left:1897px;top:653.5px;width:14px;height:14px" viewBox="0 0 16 16" fill="#198754"><path fill-rule="evenodd" d="M1 11.5a.5.5 0 0 0 .5.5h11.793l-3.147 3.146a.5.5 0 0 0 .708.708l4-4a.5.5 0 0 0 0-.708l-4-4a.5.5 0 0 0-.708.708L13.293 11H1.5a.5.5 0 0 0-.5.5m14-7a.5.5 0 0 1-.5.5H2.707l3.147 3.146a.5.5 0 1 1-.708.708l-4-4a.5.5 0 0 1 0-.708l4-4a.5.5 0 1 1 .708.708L2.707 4H14.5a.5.5 0 0 1 .5.5"/></svg>
<div class="b ab" style="left:1919px;top:645px;border-color:#dc3545;border-radius:0 4px 4px 0;"></div>
<svg class="i" style="left:1928px;top:653.5px;width:14px;height:14px" viewBox="0 0 16 16" fill="#dc3545"><path d="M5.5 5.5A.5.5 0 0 1 6 6v6a.5.5 0 0 1-1 0V6a.5.5 0 0 1 .5-.5m2.500 0a.5.5 0 0 1 .5.5v6a.5.5 0 0 1-1 0V6a.5.5 0 0 1 .5-.5m3 .5a.5.5 0 0 0-1 0v6a.5.5 0 0 0 1 0z"/><path d="M14.5 3a1 1 0 0 1-1 1H13v9a2 2 0 0 1-2 2H5a2 2 0 0 1-2-2V4h-.5a1 1 0 0 1-1-1V2a1 1 0 0 1 1-1H6a1 1 0 0 1 1-1h2a1 1 0 0 1 1 1h3.500a1 1 0 0 1 1 1zM4.118 4 4 4.059V13a1 1 0 0 0 1 1h6a1 1 0 0 0 1-1V4.059L11.882 4zM2.500 3h11V2h-11z"/></svg>
<div class="b row" style="top:689px"></div>
<div class="b cb" style="top:708px"></div>
<div class="b bd" style="top:704px;width:85px;background:#dc3545"></div>
<div class="b ab" style="left:1826px;top:701px;border-color:#0dcaf0;border-radius:4px 0 0 4px;"></div>
<svg class="i" style="left:1835px;top:709.5px;width:14px;height:14px" viewBox="0 0 16 16" fill="#0dcaf0"><path d="M16 8s-3-5.5-8-5.5S0 8 0 8s3 5.5 8 5.5S16 8 16 8M1.173 8a13 13 0 0 1 1.66-2.043C4.12 4.668 5.88 3.5 8 3.5s3.879 1.168 5.168 2.457A13 13 0 0 1 14.828 8q-.086.13-.195.288c-.335.48-.83 1.12-1.465 1.755C11.879 11.332 10.119 12.5 8 12.5s-3.879-1.168-5.168-2.457A13 13 0 0 1 1.172 8z"/><path d="M8 5.5a2.5 2.5 0 1 0 0 5 2.5 2.5 0 0 0 0-5M4.5 8a3.5 3.5 0 1 1 7 0 3.5 3.5 0 0 1-7 0"/></svg>
<div class="b ab" style="left:1857px;top:701px;border-color:#0d6efd;"></div>
<svg class="i" style="left:1866px;top:709.5px;width:14px;height:14px" viewBox="0 0 16 16" fill="#0d6efd"><path d="M12.146.146a.5.5 0 0 1 .708 0l3 3a.5.5 0 0 1 0 .708l-10 10a.5.5 0 0 1-.168.11l-5 2a.5.5 0 0 1-.65-.65l2-5a.5.5 0 0 1 .11-.168zM11.207 2.5 13.5 4.793 14.793 3.5 12.5 1.207zm1.586 3L10.5 3.207 4 9.707V10h.5a.5.5 0 0 1 .5.5v.5h.5a.5.5 0 0 1 .5.5v.5h.293zm-9.761 5.175-.106.106-1.528 3.821 3.821-1.528.106-.106A.5.5 0 0 1 5 12.5V12h-.5a.5.5 0 0 1-.5-.5V11h-.5a.5.5 0 0 1-.468-.325"/></svg>
<div class="b ab" style="left:1888px;top:701px;border-color:#198754;"></div>
<svg class="i" style="left:1897px;top:709.5px;width:14px;height:14px" viewBox="0 0 16 16" fill="#198754"><path fill-rule="evenodd" d="M1 11.5a.5.5 0 0 0 .5.5h11.793l-3.147 3.146a.5.5 0 0 0 .708.708l4-4a.5.5 0 0 0 0-.708l-4-4a.5.5 0 0 0-.708.708L13.293 11H1.5a.5.5 0 0 0-.5.5m14-7a.5.5 0 0 1-.5.5H2.707l3.147 3.146a.5.5 0 1 1-.708.708l-4-4a.5.5 0 0 1 0-.708l4-4a.5.5 0 1 1 .708.708L2.707 4H14.5a.5.5 0 0 1 .5.5"/></svg>
<div class="b ab" style="left:1919px;top:701px;border-color:#dc3545;border-radius:0 4px 4px 0;"></div>
<svg class="i" style="left:1928px;top:709.5px;width:14px;height:14px" viewBox="0 0 16 16" fill="#dc3545"><path d="M5.5 5.5A.5.5 0 0 1 6 6v6a.5.5 0 0 1-1 0V6a.5.5 0 0 1 .5-.5m2.500 0a.5.5 0 0 1 .5.5v6a.5.5 0 0 1-1 0V6a.5.5 0 0 1 .5-.5m3 .5a.5.5 0 0 0-1 0v6a.5.5 0 0 0 1 0z"/><path d="M14.5 3a1 1 0 0 1-1 1H13v9a2 2 0 0 1-2 2H5a2 2 0 0 1-2-2V4h-.5a1 1 0 0 1-1-1V2a1 1 0 0 1 1-1H6a1 1 0 0 1 1-1h2a1 1 0 0 1 1 1h3.500a1 1 0 0 1 1 1zM4.118 4 4 4.059V13a1 1 0 0 0 1 1h6a1 1 0 0 0 1-1V4.059L11.882 4zM2.500 3h11V2h-11z"/></svg>
<div class="b row odd" style="top:745px"></div>
<div class="b cb" style="top:764px"></div>
<div class="b bd" style="top:760px;width:62.8px;background:#28a745"></div>
<div class="b ab" style="left:1826px;top:757px;border-color:#0dcaf0;border-radius:4px 0 0 4px;"></div>
<svg class="i" style="left:1835px;top:765.5px;width:14px;height:14px" viewBox="0 0 16 16" fill="#0dcaf0"><path d="M16 8s-3-5.5-8-5.5S0 8 0 8s3 5.5 8 5.5S16 8 16 8M1.173 8a13 13 0 0 1 1.66-2.043C4.12 4.668 5.88 3.5 8 3.5s3.879 1.168 5.168 2.457A13 13 0 0 1 14.828 8q-.086.13-.195.288c-.335.48-.83 1.12-1.465 1.755C11.879 11.332 10.119 12.5 8 12.5s-3.879-1.168-5.168-2.457A13 13 0 0 1 1.172 8z"/><path d="M8 5.5a2.5 2.5 0 1 0 0 5 2.5 2.5 0 0 0 0-5M4.5 8a3.5 3.5 0 1 1 7 0 3.5 3.5 0 0 1-7 0"/></svg>
<div class="b ab" style="left:1857px;top:757px;border-color:#0d6efd;"></div>
<svg class="i" style="left:1866px;top:765.5px;width:14px;height:14px" viewBox="0 0 16 16" fill="#0d6efd"><path d="M12.146.146a.5.5 0 0 1 .708 0l3 3a.5.5 0 0 1 0 .708l-10 10a.5.5 0 0 1-.168.11l-5 2a.5.5 0 0 1-.65-.65l2-5a.5.5 0 0 1 .11-.168zM11.207 2.5 13.5 4.793 14.793 3.5 12.5 1.207zm1.586 3L10.5 3.207 4 9.707V10h.5a.5.5 0 0 1 .5.5v.5h.5a.5.5 0 0 1 .5.5v.5h.293zm-9.761 5.175-.106.106-1.528 3.821 3.821-1.528.106-.106A.5.5 0 0 1 5 12.5V12h-.5a.5.5 0 0 1-.5-.5V11h-.5a.5.5 0 0 1-.468-.325"/></svg>
<div class="b ab" style="left:1888px;top:757px;border-color:#198754;"></div>
<svg class="i" style="left:1897px;top:765.5px;width:14px;height:14px" viewBox="0 0 16 16" fill="#198754"><path fill-rule="evenodd" d="M1 11.5a.5.5 0 0 0 .5.5h11.793l-3.147 3.146a.5.5 0 0 0 .708.708l4-4a.5.5 0 0 0 0-.708l-4-4a.5.5 0 0 0-.708.708L13.293 11H1.5a.5.5 0 0 0-.5.5m14-7a.5.5 0 0 1-.5.5H2.707l3.147 3.146a.5.5 0 1 1-.708.708l-4-4a.5.5 0 0 1 0-.708l4-4a.5.5 0 1 1 .708.708L2.707 4H14.5a.5.5 0 0 1 .5.5"/></svg>
<div class="b ab" style="left:1919px;top:757px;border-color:#dc3545;border-radius:0 4px 4px 0;"></div>
<svg class="i" style="left:1928px;top:765.5px;width:14px;height:14px" viewBox="0 0 16 16" fill="#dc3545"><path d="M5.5 5.5A.5.5 0 0 1 6 6v6a.5.5 0 0 1-1 0V6a.5.5 0 0 1 .5-.5m2.500 0a.5.5 0 0 1 .5.5v6a.5.5 0 0 1-1 0V6a.5.5 0 0 1 .5-.5m3 .5a.5.5 0 0 0-1 0v6a.5.5 0 0 0 1 0z"/><path d="M14.5 3a1 1 0 0 1-1 1H13v9a2 2 0 0 1-2 2H5a2 2 0 0 1-2-2V4h-.5a1 1 0 0 1-1-1V2a1 1 0 0 1 1-1H6a1 1 0 0 1 1-1h2a1 1 0 0 1 1 1h3.500a1 1 0 0 1 1 1zM4.118 4 4 4.059V13a1 1 0 0 0 1 1h6a1 1 0 0 0 1-1V4.059L11.882 4zM2.500 3h11V2h-11z"/></svg>
<div class="b row" style="top:801px"></div>
<div class="b cb" style="top:820px"></div>
<div class="b bd" style="top:816px;width:79.9px;background:#ffc107"></div>
<div class="b ab" style="left:1826px;top:813px;border-color:#0dcaf0;border-radius:4px 0 0 4px;"></div>
<svg class="i" style="left:1835px;top:821.5px;width:14px;height:14px" viewBox="0 0 16 16" fill="#0dcaf0"><path d="M16 8s-3-5.5-8-5.5S0 8 0 8s3 5.5 8 5.5S16 8 16 8M1.173 8a13 13 0 0 1 1.66-2.043C4.12 4.668 5.88 3.5 8 3.5s3.879 1.168 5.168 2.457A13 13 0 0 1 14.828 8q-.086.13-.195.288c-.335.48-.83 1.12-1.465 1.755C11.879 11.332 10.119 12.5 8 12.5s-3.879-1.168-5.168-2.457A13 13 0 0 1 1.172 8z"/><path d="M8 5.5a2.5 2.5 0 1 0 0 5 2.5 2.5 0 0 0 0-5M4.5 8a3.5 3.5 0 1 1 7 0 3.5 3.5 0 0 1-7 0"/></svg>
<div class="b ab" style="left:1857px;top:813px;border-color:#0d6efd;"></div>
<svg class="i" style="left:1866px;top:821.5px;width:14px;height:14px" viewBox="0 0 16 16" fill="#0d6efd"><path d="M12.146.146a.5.5 0 0 1 .708 0l3 3a.5.5 0 0 1 0 .708l-10 10a.5.5 0 0 1-.168.11l-5 2a.5.5 0 0 1-.65-.65l2-5a.5.5 0 0 1 .11-.168zM11.207 2.5 13.5 4.793 14.793 3.5 12.5 1.207zm1.586 3L10.5 3.207 4 9.707V10h.5a.5.5 0 0 1 .5.5v.5h.5a.5.5 0 0 1 .5.5v.5h.293zm-9.761 5.175-.106.106-1.528 3.821 3.821-1.528.106-.106A.5.5 0 0 1 5 12.5V12h-.5a.5.5 0 0 1-.5-.5V11h-.5a.5.5 0 0 1-.468-.325"/></svg>
<div class="b ab" style="left:1888px;top:813px;border-color:#198754;"></div>
<svg class="i" style="left:1897px;top:821.5px;width:14px;height:14px" viewBox="0 0 16 16" fill="#198754"><path fill-rule="evenodd" d="M1 11.5a.5.5 0 0 0 .5.5h11.793l-3.147 3.146a.5.5 0 0 0 .708.708l4-4a.5.5 0 0 0 0-.708l-4-4a.5.5 0 0 0-.708.708L13.293 11H1.5a.5.5 0 0 0-.5.5m14-7a.5.5 0 0 1-.5.5H2.707l3.147 3.146a.5.5 0 1 1-.708.708l-4-4a.5.5 0 0 1 0-.708l4-4a.5.5 0 1 1 .708.708L2.707 4H14.5a.5.5 0 0 1 .5.5"/></svg>
<div class="b ab" style="left:1919px;top:813px;border-color:#dc3545;border-radius:0 4px 4px 0;"></div>
<svg class="i" style="left:1928px;top:821.5px;width:14px;height:14px" viewBox="0 0 16 16" fill="#dc3545"><path d="M5.5 5.5A.5.5 0 0 1 6 6v6a.5.5 0 0 1-1 0V6a.5.5 0 0 1 .5-.5m2.500 0a.5.5 0 0 1 .5.5v6a.5.5 0 0 1-1 0V6a.5.5 0 0 1 .5-.5m3 .5a.5.5 0 0 0-1 0v6a.5.5 0 0 0 1 0z"/><path d="M14.5 3a1 1 0 0 1-1 1H13v9a2 2 0 0 1-2 2H5a2 2 0 0 1-2-2V4h-.5a1 1 0 0 1-1-1V2a1 1 0 0 1 1-1H6a1 1 0 0 1 1-1h2a1 1 0 0 1 1 1h3.500a1 1 0 0 1 1 1zM4.118 4 4 4.059V13a1 1 0 0 0 1 1h6a1 1 0 0 0 1-1V4.059L11.882 4zM2.500 3h11V2h-11z"/></svg>
<div class="b row odd" style="top:857px"></div>
<div class="b cb" style="top:876px"></div>
<div class="b bd" style="top:872px;width:89.3px;background:#17a2b8"></div>
<div class="b ab" style="left:1826px;top:869px;border-color:#0dcaf0;border-radius:4px 0 0 4px;"></div>
<svg class="i" style="left:1835px;top:877.5px;width:14px;height:14px" viewBox="0 0 16 16" fill="#0dcaf0"><path d="M16 8s-3-5.5-8-5.5S0 8 0 8s3 5.5 8 5.5S16 8 16 8M1.173 8a13 13 0 0 1 1.66-2.043C4.12 4.668 5.88 3.5 8 3.5s3.879 1.168 5.168 2.457A13 13 0 0 1 14.828 8q-.086.13-.195.288c-.335.48-.83 1.12-1.465 1.755C11.879 11.332 10.119 12.5 8 12.5s-3.879-1.168-5.168-2.457A13 13 0 0 1 1.172 8z"/><path d="M8 5.5a2.5 2.5 0 1 0 0 5 2.5 2.5 0 0 0 0-5M4.5 8a3.5 3.5 0 1 1 7 0 3.5 3.5 0 0 1-7 0"/></svg>
<div class="b ab" style="left:1857px;top:869px;border-color:#0d6efd;"></div>
<svg class="i" style="left:1866px;top:877.5px;width:14px;height:14px" viewBox="0 0 16 16" fill="#0d6efd"><path d="M12.146.146a.5.5 0 0 1 .708 0l3 3a.5.5 0 0 1 0 .708l-10 10a.5.5 0 0 1-.168.11l-5 2a.5.5 0 0 1-.65-.65l2-5a.5.5 0 0 1 .11-.168zM11.207 2.5 13.5 4.793 14.793 3.5 12.5 1.207zm1.586 3L10.5 3.207 4 9.707V10h.5a.5.5 0 0 1 .5.5v.5h.5a.5.5 0 0 1 .5.5v.5h.293zm-9.761 5.175-.106.106-1.528 3.821 3.821-1.528.106-.106A.5.5 0 0 1 5 12.5V12h-.5a.5.5 0 0 1-.5-.5V11h-.5a.5.5 0 0 1-.468-.325"/></svg>
<div class="b ab" style="left:1888px;top:869px;border-color:#198754;"></div>
<svg class="i" style="left:1897px;top:877.5px;width:14px;height:14px" viewBox="0 0 16 16" fill="#198754"><path fill-rule="evenodd" d="M1 11.5a.5.5 0 0 0 .5.5h11.793l-3.147 3.146a.5.5 0 0 0 .708.708l4-4a.5.5 0 0 0 0-.708l-4-4a.5.5 0 0 0-.708.708L13.293 11H1.5a.5.5 0 0 0-.5.5m14-7a.5.5 0 0 1-.5.5H2.707l3.147 3.146a.5.5 0 1 1-.708.708l-4-4a.5.5 0 0 1 0-.708l4-4a.5.5 0 1 1 .708.708L2.707 4H14.5a.5.5 0 0 1 .5.5"/></svg>
<div class="b ab" style="left:1919px;top:869px;border-color:#dc3545;border-radius:0 4px 4px 0;"></div>
<svg class="i" style="left:1928px;top:877.5px;width:14px;height:14px" viewBox="0 0 16 16" fill="#dc3545"><path d="M5.5 5.5A.5.5 0 0 1 6 6v6a.5.5 0 0 1-1 0V6a.5.5 0 0 1 .5-.5m2.500 0a.5.5 0 0 1 .5.5v6a.5.5 0 0 1-1 0V6a.5.5 0 0 1 .5-.5m3 .5a.5.5 0 0 0-1 0v6a.5.5 0 0 0 1 0z"/><path d="M14.5 3a1 1 0 0 1-1 1H13v9a2 2 0 0 1-2 2H5a2 2 0 0 1-2-2V4h-.5a1 1 0 0 1-1-1V2a1 1 0 0 1 1-1H6a1 1 0 0 1 1-1h2a1 1 0 0 1 1 1h3.500a1 1 0 0 1 1 1zM4.118 4 4 4.059V13a1 1 0 0 0 1 1h6a1 1 0 0 0 1-1V4.059L11.882 4zM2.500 3h11V2h-11z"/></svg>
<div class="b row" style="top:913px"></div>
<div class="b cb" style="top:932px"></div>
<div class="b bd" style="top:928px;width:85px;background:#dc3545"></div>
<div class="b ab" style="left:1826px;top:925px;border-color:#0dcaf0;border-radius:4px 0 0 4px;"></div>
<svg class="i" style="left:1835px;top:933.5px;width:14px;height:14px" viewBox="0 0 16 16" fill="#0dcaf0"><path d="M16 8s-3-5.5-8-5.5S0 8 0 8s3 5.5 8 5.5S16 8 16 8M1.173 8a13 13 0 0 1 1.66-2.043C4.12 4.668 5.88 3.5 8 3.5s3.879 1.168 5.168 2.457A13 13 0 0 1 14.828 8q-.086.13-.195.288c-.335.48-.83 1.12-1.465 1.755C11.879 11.332 10.119 12.5 8 12.5s-3.879-1.168-5.168-2.457A13 13 0 0 1 1.172 8z"/><path d="M8 5.5a2.5 2.5 0 1 0 0 5 2.5 2.5 0 0 0 0-5M4.5 8a3.5 3.5 0 1 1 7 0 3.5 3.5 0 0 1-7 0"/></svg>
<div class="b ab" style="left:1857px;top:925px;border-color:#0d6efd;"></div>
<svg class="i" style="left:1866px;top:933.5px;width:14px;height:14px" viewBox="0 0 16 16" fill="#0d6efd"><path d="M12.146.146a.5.5 0 0 1 .708 0l3 3a.5.5 0 0 1 0 .708l-10 10a.5.5 0 0 1-.168.11l-5 2a.5.5 0 0 1-.65-.65l2-5a.5.5 0 0 1 .11-.168zM11.207 2.5 13.5 4.793 14.793 3.5 12.5 1.207zm1.586 3L10.5 3.207 4 9.707V10h.5a.5.5 0 0 1 .5.5v.5h.5a.5.5 0 0 1 .5.5v.5h.293zm-9.761 5.175-.106.106-1.528 3.821 3.821-1.528.106-.106A.5.5 0 0 1 5 12.5V12h-.5a.5.5 0 0 1-.5-.5V11h-.5a.5.5 0 0 1-.468-.325"/></svg>
<div class="b ab" style="left:1888px;top:925px;border-color:#198754;"></div>
<svg class="i" style="left:1897px;top:933.5px;width:14px;height:14px" viewBox="0 0 16 16" fill="#198754"><path fill-rule="evenodd" d="M1 11.5a.5.5 0 0 0 .5.5h11.793l-3.147 3.146a.5.5 0 0 0 .708.708l4-4a.5.5 0 0 0 0-.708l-4-4a.5.5 0 0 0-.708.708L13.293 11H1.5a.5.5 0 0 0-.5.5m14-7a.5.5 0 0 1-.5.5H2.707l3.147 3.146a.5.5 0 1 1-.708.708l-4-4a.5.5 0 0 1 0-.708l4-4a.5.5 0 1 1 .708.708L2.707 4H14.5a.5.5 0 0 1 .5.5"/></svg>
<div class="b ab" style="left:1919px;top:925px;border-color:#dc3545;border-radius:0 4px 4px 0;"></div>
<svg class="i" style="left:1928px;top:933.5px;width:14px;height:14px" viewBox="0 0 16 16" fill="#dc3545"><path d="M5.5 5.5A.5.5 0 0 1 6 6v6a.5.5 0 0 1-1 0V6a.5.5 0 0 1 .5-.5m2.500 0a.5.5 0 0 1 .5.5v6a.5.5 0 0 1-1 0V6a.5.5 0 0 1 .5-.5m3 .5a.5.5 0 0 0-1 0v6a.5.5 0 0 0 1 0z"/><path d="M14.5 3a1 1 0 0 1-1 1H13v9a2 2 0 0 1-2 2H5a2 2 0 0 1-2-2V4h-.5a1 1 0 0 1-1-1V2a1 1 0 0 1 1-1H6a1 1 0 0 1 1-1h2a1 1 0 0 1 1 1h3.500a1 1 0 0 1 1 1zM4.118 4 4 4.059V13a1 1 0 0 0 1 1h6a1 1 0 0 0 1-1V4.059L11.882 4zM2.500 3h11V2h-11z"/></svg>
<div class="b row odd" style="top:969px"></div>
<div class="b cb" style="top:988px"></div>
<div class="b bd" style="top:984px;width:69px;background:#6c757d"></div>
<div class="b ab" style="left:1826px;top:981px;border-color:#0dcaf0;border-radius:4px 0 0 4px;"></div>
<svg class="i" style="left:1835px;top:989.5px;width:14px;height:14px" viewBox="0 0 16 16" fill="#0dcaf0"><path d="M16 8s-3-5.5-8-5.5S0 8 0 8s3 5.5 8 5.5S16 8 16 8M1.173 8a13 13 0 0 1 1.66-2.043C4.12 4.668 5.88 3.5 8 3.5s3.879 1.168 5.168 2.457A13 13 0 0 1 14.828 8q-.086.13-.195.288c-.335.48-.83 1.12-1.465 1.755C11.879 11.332 10.119 12.5 8 12.5s-3.879-1.168-5.168-2.457A13 13 0 0 1 1.172 8z"/><path d="M8 5.5a2.5 2.5 0 1 0 0 5 2.5 2.5 0 0 0 0-5M4.5 8a3.5 3.5 0 1 1 7 0 3.5 3.5 0 0 1-7 0"/></svg>
<div class="b ab" style="left:1857px;top:981px;border-color:#0d6efd;"></div>
<svg class="i" style="left:1866px;top:989.5px;width:14px;height:14px" viewBox="0 0 16 16" fill="#0d6efd"><path d="M12.146.146a.5.5 0 0 1 .708 0l3 3a.5.5 0 0 1 0 .708l-10 10a.5.5 0 0 1-.168.11l-5 2a.5.5 0 0 1-.65-.65l2-5a.5.5 0 0 1 .11-.168zM11.207 2.5 13.5 4.793 14.793 3.5 12.5 1.207zm1.586 3L10.5 3.207 4 9.707V10h.5a.5.5 0 0 1 .5.5v.5h.5a.5.5 0 0 1 .5.5v.5h.293zm-9.761 5.175-.106.106-1.528 3.821 3.821-1.528.106-.106A.5.5 0 0 1 5 12.5V12h-.5a.5.5 0 0 1-.5-.5V11h-.5a.5.5 0 0 1-.468-.325"/></svg>
<div class="b ab" style="left:1888px;top:981px;border-color:#198754;"></div>
<svg class="i" style="left:1897px;top:989.5px;width:14px;height:14px" viewBox="0 0 16 16" fill="#198754"><path fill-rule="evenodd" d="M1 11.5a.5.5 0 0 0 .5.5h11.793l-3.147 3.146a.5.5 0 0 0 .708.708l4-4a.5.5 0 0 0 0-.708l-4-4a.5.5 0 0 0-.708.708L13.293 11H1.5a.5.5 0 0 0-.5.5m14-7a.5.5 0 0 1-.5.5H2.707l3.147 3.146a.5.5 0 1 1-.708.708l-4-4a.5.5 0 0 1 0-.708l4-4a.5.5 0 1 1 .708.708L2.707 4H14.5a.5.5 0 0 1 .5.5"/></svg>
<div class="b ab" style="left:1919px;top:981px;border-color:#dc3545;border-radius:0 4px 4px 0;"></div>
<svg class="i" style="left:1928px;top:989.5px;width:14px;height:14px" viewBox="0 0 16 16" fill="#dc3545"><path d="M5.5 5.5A.5.5 0 0 1 6 6v6a.5.5 0 0 1-1 0V6a.5.5 0 0 1 .5-.5m2.500 0a.5.5 0 0 1 .5.5v6a.5.5 0 0 1-1 0V6a.5.5 0 0 1 .5-.5m3 .5a.5.5 0 0 0-1 0v6a.5.5 0 0 0 1 0z"/><path d="M14.5 3a1 1 0 0 1-1 1H13v9a2 2 0 0 1-2 2H5a2 2 0 0 1-2-2V4h-.5a1 1 0 0 1-1-1V2a1 1 0 0 1 1-1H6a1 1 0 0 1 1-1h2a1 1 0 0 1 1 1h3.500a1 1 0 0 1 1 1zM4.118 4 4 4.059V13a1 1 0 0 0 1 1h6a1 1 0 0 0 1-1V4.059L11.882 4zM2.500 3h11V2h-11z"/></svg>
<span class="t" style="left:34.30px;top:20px;font-size:19.8px;letter-spacing:0.000px;color:#fff;transform:scaleX(0.9510);transform-origin:0 0;font-weight:700;">Asset Tracker</span>
<span class="t nv" style="left:212.60px;top:19px;font-size:17.8px;letter-spacing:0.225px;color:#fff;">Dashboard</span>
<span class="t nv" style="left:356.60px;top:19px;font-size:17.8px;letter-spacing:0.000px;color:#fff;transform:scaleX(0.9501);transform-origin:0 0;">Assets</span>
<span class="t nv" style="left:481.70px;top:19px;font-size:17.8px;letter-spacing:0.197px;color:#fff;">Locations</span>
<span class="t nv" style="left:633.30px;top:19px;font-size:17.8px;letter-spacing:0.144px;color:#fff;">People</span>
<span class="t nv" style="left:763.40px;top:19px;font-size:17.8px;letter-spacing:0.272px;color:#fff;">Reports</span>
<span class="t nv" style="left:883.10px;top:19px;font-size:17.8px;letter-spacing:0.000px;color:#fff;transform:scaleX(1.0790);transform-origin:0 0;">Administration</span>
<span class="t nv" style="left:1079.20px;top:19px;font-size:17.8px;letter-spacing:0.000px;color:#fff;transform:scaleX(1.0723);transform-origin:0 0;">Activity</span>
<span class="t nv" style="left:1758.10px;top:19px;font-size:17.8px;letter-spacing:0.150px;color:#fff;">admin@assettracker.com</span>
<span class="t ttl" style="left:9.30px;top:79px;font-size:40px;letter-spacing:0.000px;color:#212529;transform:scaleX(0.8543);transform-origin:0 0;">Assets</span>
<span class="t" style="left:1550.90px;top:94px;font-size:15.9px;letter-spacing:-0.322px;color:#6c757d;">Advanced Search</span>
<span class="t" style="left:1725.90px;top:94px;font-size:15.9px;letter-spacing:-0.399px;color:#0dcaf0;">Reset Columns</span>
<span class="t" style="left:1885.00px;top:94px;font-size:15.9px;letter-spacing:-0.120px;color:#fff;">Add New Asset</span>
<span class="t" style="left:33.50px;top:202px;font-size:15.9px;letter-spacing:0.000px;color:#212529;transform:scaleX(0.9361);transform-origin:0 0;">Show</span>
<span class="t" style="left:89.30px;top:202px;font-size:15.9px;letter-spacing:0.000px;color:#212529;transform:scaleX(0.9082);transform-origin:0 0;">25</span>
<span class="t" style="left:160.70px;top:202px;font-size:15.9px;letter-spacing:-0.281px;color:#212529;">assets per page</span>
<span class="t" style="left:1625.50px;top:202px;font-size:15.9px;letter-spacing:-0.346px;color:#212529;">Quick search assets:</span>
<span class="t th" style="left:155.20px;top:265px;font-size:15.7px;letter-spacing:0.000px;color:#212529;transform:scaleX(0.9505);transform-origin:0 0;">ASSET NAME</span>
<span class="t th" style="left:442.70px;top:265px;font-size:15.7px;letter-spacing:0.000px;color:#212529;transform:scaleX(0.8962);transform-origin:0 0;">ASSET TYPE</span>
<span class="t th" style="left:632.10px;top:265px;font-size:15.7px;letter-spacing:-0.341px;color:#212529;">MODEL</span>
<span class="t th" style="left:787.34px;top:265px;font-size:15.7px;letter-spacing:0.000px;color:#212529;transform:scaleX(0.9629);transform-origin:0 0;">MANUFACTURER</span>
<span class="t th" style="left:971.00px;top:265px;font-size:15.7px;letter-spacing:0.000px;color:#212529;transform:scaleX(0.9471);transform-origin:0 0;">SERIAL NUMBER</span>
<span class="t th" style="left:1149.30px;top:265px;font-size:15.7px;letter-spacing:0.000px;color:#212529;transform:scaleX(0.9476);transform-origin:0 0;">CURRENT LOCATION</span>
<span class="t th" style="left:1360.00px;top:265px;font-size:15.7px;letter-spacing:-0.372px;color:#212529;">CUSTODIAN</span>
<span class="t th" style="left:1511.90px;top:265px;font-size:15.7px;letter-spacing:0.000px;color:#212529;transform:scaleX(0.9189);transform-origin:0 0;">STATUS</span>
<span class="t th" style="left:1655.40px;top:265px;font-size:15.7px;letter-spacing:0.000px;color:#212529;transform:scaleX(0.9116);transform-origin:0 0;">CREATED DATE</span>
<span class="t th" style="left:1854.30px;top:265px;font-size:15.7px;letter-spacing:0.000px;color:#212529;transform:scaleX(0.9572);transform-origin:0 0;">ACTIONS</span>
<span class="t" style="left:155.10px;top:319px;font-size:15.9px;letter-spacing:-0.034px;color:#000;">Network Switch - XCY-5261</span>
<span class="t" style="left:443.10px;top:319px;font-size:15.9px;letter-spacing:0.070px;color:#000;">Network Switch</span>
<span class="t" style="left:632.30px;top:319px;font-size:15.9px;letter-spacing:0.184px;color:#000;">Model-xdgS</span>
<span class="t" style="left:787.40px;top:319px;font-size:15.9px;letter-spacing:-0.015px;color:#000;">Dell</span>
<span class="t" style="left:970.80px;top:319px;font-size:15.9px;letter-spacing:0.073px;color:#000;">SN-3149-kHbf</span>
<span class="t" style="left:1149.10px;top:319px;font-size:15.9px;letter-spacing:-0.309px;color:#000;">Server Room</span>
<span class="t" style="left:1359.80px;top:319px;font-size:15.9px;letter-spacing:-0.067px;color:#000;">Mike Johnson</span>
<span class="t" style="left:1654.90px;top:319px;font-size:15.9px;letter-spacing:0.212px;color:#000;">09/18/2025</span>
<span class="t bg" style="left:1523.30px;top:319px;font-size:13.8px;letter-spacing:0.179px;color:#fff;">In Storage</span>
<span class="t" style="left:155.10px;top:375px;font-size:15.9px;letter-spacing:-0.309px;color:#000;">Access Point - BYX-5198</span>
<span class="t" style="left:443.10px;top:375px;font-size:15.9px;letter-spacing:0.000px;color:#000;transform:scaleX(0.9408);transform-origin:0 0;">Server</span>
<span class="t" style="left:632.30px;top:375px;font-size:15.9px;letter-spacing:-0.391px;color:#000;">Model-FEzP</span>
<span class="t" style="left:787.40px;top:375px;font-size:15.9px;letter-spacing:0.000px;color:#000;transform:scaleX(0.9205);transform-origin:0 0;">HP</span>
<span class="t" style="left:970.80px;top:375px;font-size:15.9px;letter-spacing:-0.080px;color:#000;">SN-5414-ZYMq</span>
<span class="t" style="left:1149.10px;top:375px;font-size:15.9px;letter-spacing:0.174px;color:#000;">Main Building</span>
<span class="t" style="left:1359.80px;top:375px;font-size:15.9px;letter-spacing:-0.067px;color:#000;">Mike Johnson</span>
<span class="t" style="left:1654.90px;top:375px;font-size:15.9px;letter-spacing:0.212px;color:#000;">09/18/2025</span>
<span class="t bg" style="left:1523.30px;top:375px;font-size:13.8px;letter-spacing:0.179px;color:#fff;">In Storage</span>
<span class="t" style="left:155.10px;top:431px;font-size:15.9px;letter-spacing:-0.010px;color:#000;">Laptop - PMP-7068</span>
<span class="t" style="left:443.10px;top:431px;font-size:15.9px;letter-spacing:0.139px;color:#000;">Laptop</span>
<span class="t" style="left:632.30px;top:431px;font-size:15.9px;letter-spacing:0.201px;color:#000;">Model-hQbR</span>
<span class="t" style="left:787.40px;top:431px;font-size:15.9px;letter-spacing:0.000px;color:#000;transform:scaleX(0.9394);transform-origin:0 0;">Cisco</span>
<span class="t" style="left:970.80px;top:431px;font-size:15.9px;letter-spacing:-0.169px;color:#000;">SN-4644-OcOe</span>
<span class="t" style="left:1149.10px;top:431px;font-size:15.9px;letter-spacing:0.174px;color:#000;">Main Building</span>
<span class="t" style="left:1359.80px;top:431px;font-size:15.9px;letter-spacing:-0.150px;color:#000;">John Smith</span>
<span class="t" style="left:1654.90px;top:431px;font-size:15.9px;letter-spacing:0.212px;color:#000;">09/18/2025</span>
<span class="t bg" style="left:1524.20px;top:431px;font-size:13.8px;letter-spacing:0.160px;color:#fff;">Active</span>
<span class="t" style="left:155.10px;top:487px;font-size:15.9px;letter-spacing:0.067px;color:#000;">Desktop Computer - MVK-1063</span>
<span class="t" style="left:443.10px;top:487px;font-size:15.9px;letter-spacing:0.085px;color:#000;">Desktop Computer</span>
<span class="t" style="left:632.30px;top:487px;font-size:15.9px;letter-spacing:0.000px;color:#000;transform:scaleX(1.0544);transform-origin:0 0;">Model-bqUf</span>
<span class="t" style="left:787.40px;top:487px;font-size:15.9px;letter-spacing:-0.085px;color:#000;">Apples</span>
<span class="t" style="left:970.80px;top:487px;font-size:15.9px;letter-spacing:-0.042px;color:#000;">SN-2622-Zpre</span>
<span class="t" style="left:1149.10px;top:487px;font-size:15.9px;letter-spacing:-0.309px;color:#000;">Server Room</span>
<span class="t" style="left:1359.80px;top:487px;font-size:15.9px;letter-spacing:-0.067px;color:#000;">Mike Johnson</span>
<span class="t" style="left:1654.90px;top:487px;font-size:15.9px;letter-spacing:0.212px;color:#000;">09/18/2025</span>
<span class="t bg" style="left:1523.30px;top:487px;font-size:13.8px;letter-spacing:0.001px;color:#fff;">In Repair</span>
<span class="t" style="left:155.10px;top:543px;font-size:15.9px;letter-spacing:-0.092px;color:#000;">Access Point - ZHM-3503</span>
<span class="t" style="left:443.10px;top:543px;font-size:15.9px;letter-spacing:0.000px;color:#000;transform:scaleX(0.9408);transform-origin:0 0;">Server</span>
<span class="t" style="left:632.30px;top:543px;font-size:15.9px;letter-spacing:-0.101px;color:#000;">Model-cFGQ</span>
<span class="t" style="left:787.40px;top:543px;font-size:15.9px;letter-spacing:0.339px;color:#000;">Microsoft</span>
<span class="t" style="left:970.80px;top:543px;font-size:15.9px;letter-spacing:0.000px;color:#000;transform:scaleX(0.9403);transform-origin:0 0;">SN-4746-aFYR</span>
<span class="t" style="left:1149.10px;top:543px;font-size:15.9px;letter-spacing:0.039px;color:#000;">IT Department</span>
<span class="t" style="left:1359.80px;top:543px;font-size:15.9px;letter-spacing:-0.067px;color:#000;">Mike Johnson</span>
<span class="t" style="left:1654.90px;top:543px;font-size:15.9px;letter-spacing:0.212px;color:#000;">09/18/2025</span>
<span class="t bg" style="left:1523.30px;top:543px;font-size:13.8px;letter-spacing:0.366px;color:#fff;">Retired</span>
<span class="t" style="left:155.10px;top:599px;font-size:15.9px;letter-spacing:-0.336px;color:#000;">Security Camera - FGJ-8349</span>
<span class="t" style="left:443.10px;top:599px;font-size:15.9px;letter-spacing:-0.299px;color:#000;">Security Camera</span>
<span class="t" style="left:632.30px;top:599px;font-size:15.9px;letter-spacing:0.184px;color:#000;">Model-pXCf</span>
<span class="t" style="left:787.40px;top:599px;font-size:15.9px;letter-spacing:0.000px;color:#000;transform:scaleX(1.0546);transform-origin:0 0;">Ubiquiti</span>
<span class="t" style="left:970.80px;top:599px;font-size:15.9px;letter-spacing:-0.176px;color:#000;">SN-8045-eUDe</span>
<span class="t" style="left:1149.10px;top:599px;font-size:15.9px;letter-spacing:-0.309px;color:#000;">Server Room</span>
<span class="t" style="left:1359.80px;top:599px;font-size:15.9px;letter-spacing:-0.067px;color:#000;">Mike Johnson</span>
<span class="t" style="left:1654.90px;top:599px;font-size:15.9px;letter-spacing:0.212px;color:#000;">09/18/2025</span>
<span class="t bg" style="left:1523.30px;top:599px;font-size:13.8px;letter-spacing:0.001px;color:#fff;">In Repair</span>
<span class="t" style="left:155.10px;top:655px;font-size:15.9px;letter-spacing:0.001px;color:#000;">Network Switch - JIW-8065</span>
<span class="t" style="left:443.10px;top:655px;font-size:15.9px;letter-spacing:0.070px;color:#000;">Network Switch</span>
<span class="t" style="left:632.30px;top:655px;font-size:15.9px;letter-spacing:0.207px;color:#000;">Model-Czjq</span>
<span class="t" style="left:787.40px;top:655px;font-size:15.9px;letter-spacing:0.000px;color:#000;transform:scaleX(0.9205);transform-origin:0 0;">HP</span>
<span class="t" style="left:970.80px;top:655px;font-size:15.9px;letter-spacing:0.024px;color:#000;">SN-8007-bxhi</span>
<span class="t" style="left:1149.10px;top:655px;font-size:15.9px;letter-spacing:0.174px;color:#000;">Main Building</span>
<span class="t" style="left:1359.80px;top:655px;font-size:15.9px;letter-spacing:-0.150px;color:#000;">John Smith</span>
<span class="t" style="left:1654.90px;top:655px;font-size:15.9px;letter-spacing:0.212px;color:#000;">09/18/2025</span>
<span class="t bg" style="left:1523.30px;top:655px;font-size:13.8px;letter-spacing:0.179px;color:#fff;">In Storage</span>
<span class="t" style="left:155.10px;top:711px;font-size:15.9px;letter-spacing:-0.274px;color:#000;">Security Camera - CQS-2782</span>
<span class="t" style="left:443.10px;top:711px;font-size:15.9px;letter-spacing:-0.299px;color:#000;">Security Camera</span>
<span class="t" style="left:632.30px;top:711px;font-size:15.9px;letter-spacing:0.105px;color:#000;">Model-XXfc</span>
<span class="t" style="left:787.40px;top:711px;font-size:15.9px;letter-spacing:0.183px;color:#000;">Apple</span>
<span class="t" style="left:970.80px;top:711px;font-size:15.9px;letter-spacing:0.165px;color:#000;">SN-6559-trdh</span>
<span class="t" style="left:1149.10px;top:711px;font-size:15.9px;letter-spacing:-0.309px;color:#000;">Server Room</span>
<span class="t" style="left:1359.80px;top:711px;font-size:15.9px;letter-spacing:-0.067px;color:#000;">Mike Johnson</span>
<span class="t" style="left:1654.90px;top:711px;font-size:15.9px;letter-spacing:0.212px;color:#000;">09/18/2025</span>
<span class="t bg" style="left:1523.26px;top:711px;font-size:13.8px;letter-spacing:0.000px;color:#fff;transform:scaleX(1.0439);transform-origin:0 0;">Damaged</span>
<span class="t" style="left:155.10px;top:767px;font-size:15.9px;letter-spacing:-0.004px;color:#000;">Laptop - KZI-8834</span>
<span class="t" style="left:443.10px;top:767px;font-size:15.9px;letter-spacing:0.139px;color:#000;">Laptop</span>
<span class="t" style="left:632.30px;top:767px;font-size:15.9px;letter-spacing:0.323px;color:#000;">Model-YDMb</span>
<span class="t" style="left:787.40px;top:767px;font-size:15.9px;letter-spacing:0.183px;color:#000;">Apple</span>
<span class="t" style="left:970.80px;top:767px;font-size:15.9px;letter-spacing:-0.391px;color:#000;">SN-5763-vpSJ</span>
<span class="t" style="left:1149.10px;top:767px;font-size:15.9px;letter-spacing:-0.092px;color:#000;">Conference Room A</span>
<span class="t" style="left:1359.80px;top:767px;font-size:15.9px;letter-spacing:-0.067px;color:#000;">Mike Johnson</span>
<span class="t" style="left:1654.90px;top:767px;font-size:15.9px;letter-spacing:0.212px;color:#000;">09/18/2025</span>
<span class="t bg" style="left:1524.20px;top:767px;font-size:13.8px;letter-spacing:0.160px;color:#fff;">Active</span>
<span class="t" style="left:155.10px;top:823px;font-size:15.9px;letter-spacing:0.129px;color:#000;">Network Switch - WIM-8807</span>
<span class="t" style="left:443.10px;top:823px;font-size:15.9px;letter-spacing:0.070px;color:#000;">Network Switch</span>
<span class="t" style="left:632.30px;top:823px;font-size:15.9px;letter-spacing:-0.146px;color:#000;">Model-CRXw</span>
<span class="t" style="left:787.40px;top:823px;font-size:15.9px;letter-spacing:-0.015px;color:#000;">Dell</span>
<span class="t" style="left:970.80px;top:823px;font-size:15.9px;letter-spacing:-0.261px;color:#000;">SN-8793-ndYP</span>
<span class="t" style="left:1149.10px;top:823px;font-size:15.9px;letter-spacing:-0.309px;color:#000;">Server Room</span>
<span class="t" style="left:1359.80px;top:823px;font-size:15.9px;letter-spacing:-0.067px;color:#000;">Mike Johnson</span>
<span class="t" style="left:1654.90px;top:823px;font-size:15.9px;letter-spacing:0.212px;color:#000;">09/18/2025</span>
<span class="t bg" style="left:1523.30px;top:823px;font-size:13.8px;letter-spacing:0.001px;color:#fff;">In Repair</span>
<span class="t" style="left:155.10px;top:879px;font-size:15.9px;letter-spacing:-0.046px;color:#000;">NVR - AMC-1578</span>
<span class="t" style="left:443.10px;top:879px;font-size:15.9px;letter-spacing:0.000px;color:#000;transform:scaleX(0.9408);transform-origin:0 0;">Server</span>
<span class="t" style="left:632.30px;top:879px;font-size:15.9px;letter-spacing:0.340px;color:#000;">Model-jUqZ</span>
<span class="t" style="left:787.40px;top:879px;font-size:15.9px;letter-spacing:-0.155px;color:#000;">Lenovo</span>
<span class="t" style="left:970.80px;top:879px;font-size:15.9px;letter-spacing:0.026px;color:#000;">SN-9917-eqMa</span>
<span class="t" style="left:1149.10px;top:879px;font-size:15.9px;letter-spacing:-0.090px;color:#000;">Reception</span>
<span class="t" style="left:1359.80px;top:879px;font-size:15.9px;letter-spacing:-0.150px;color:#000;">John Smith</span>
<span class="t" style="left:1654.90px;top:879px;font-size:15.9px;letter-spacing:0.212px;color:#000;">09/18/2025</span>
<span class="t bg" style="left:1523.30px;top:879px;font-size:13.8px;letter-spacing:0.179px;color:#fff;">In Storage</span>
<span class="t" style="left:155.10px;top:935px;font-size:15.9px;letter-spacing:0.000px;color:#000;transform:scaleX(0.9496);transform-origin:0 0;">Access Point - CEE-8128</span>
<span class="t" style="left:443.10px;top:935px;font-size:15.9px;letter-spacing:0.000px;color:#000;transform:scaleX(0.9408);transform-origin:0 0;">Server</span>
<span class="t" style="left:632.30px;top:935px;font-size:15.9px;letter-spacing:0.136px;color:#000;">Model-zypP</span>
<span class="t" style="left:787.40px;top:935px;font-size:15.9px;letter-spacing:0.144px;color:#000;">Fortinet</span>
<span class="t" style="left:970.80px;top:935px;font-size:15.9px;letter-spacing:-0.094px;color:#000;">SN-5149-gYqP</span>
<span class="t" style="left:1149.10px;top:935px;font-size:15.9px;letter-spacing:0.174px;color:#000;">Main Building</span>
<span class="t" style="left:1359.80px;top:935px;font-size:15.9px;letter-spacing:-0.067px;color:#000;">Mike Johnson</span>
<span class="t" style="left:1654.90px;top:935px;font-size:15.9px;letter-spacing:0.212px;color:#000;">09/18/2025</span>
<span class="t bg" style="left:1523.26px;top:935px;font-size:13.8px;letter-spacing:0.000px;color:#fff;transform:scaleX(1.0439);transform-origin:0 0;">Damaged</span>
<span class="t" style="left:155.10px;top:991px;font-size:15.9px;letter-spacing:0.006px;color:#000;">Laptop - IJN-8367</span>
<span class="t" style="left:443.10px;top:991px;font-size:15.9px;letter-spacing:0.139px;color:#000;">Laptop</span>
<span class="t" style="left:632.30px;top:991px;font-size:15.9px;letter-spacing:0.004px;color:#000;">Model-sCOI</span>
<span class="t" style="left:787.40px;top:991px;font-size:15.9px;letter-spacing:0.000px;color:#000;transform:scaleX(1.0546);transform-origin:0 0;">Ubiquiti</span>
<span class="t" style="left:970.80px;top:991px;font-size:15.9px;letter-spacing:-0.188px;color:#000;">SN-2200-fFvy</span>
<span class="t" style="left:1149.10px;top:991px;font-size:15.9px;letter-spacing:-0.309px;color:#000;">Server Room</span>
<span class="t" style="left:1359.80px;top:991px;font-size:15.9px;letter-spacing:-0.067px;color:#000;">Mike Johnson</span>
<span class="t" style="left:1654.90px;top:991px;font-size:15.9px;letter-spacing:0.212px;color:#000;">09/18/2025</span>
<span class="t bg" style="left:1523.30px;top:991px;font-size:13.8px;letter-spacing:0.366px;color:#fff;">Retired</span>
</body></html>
